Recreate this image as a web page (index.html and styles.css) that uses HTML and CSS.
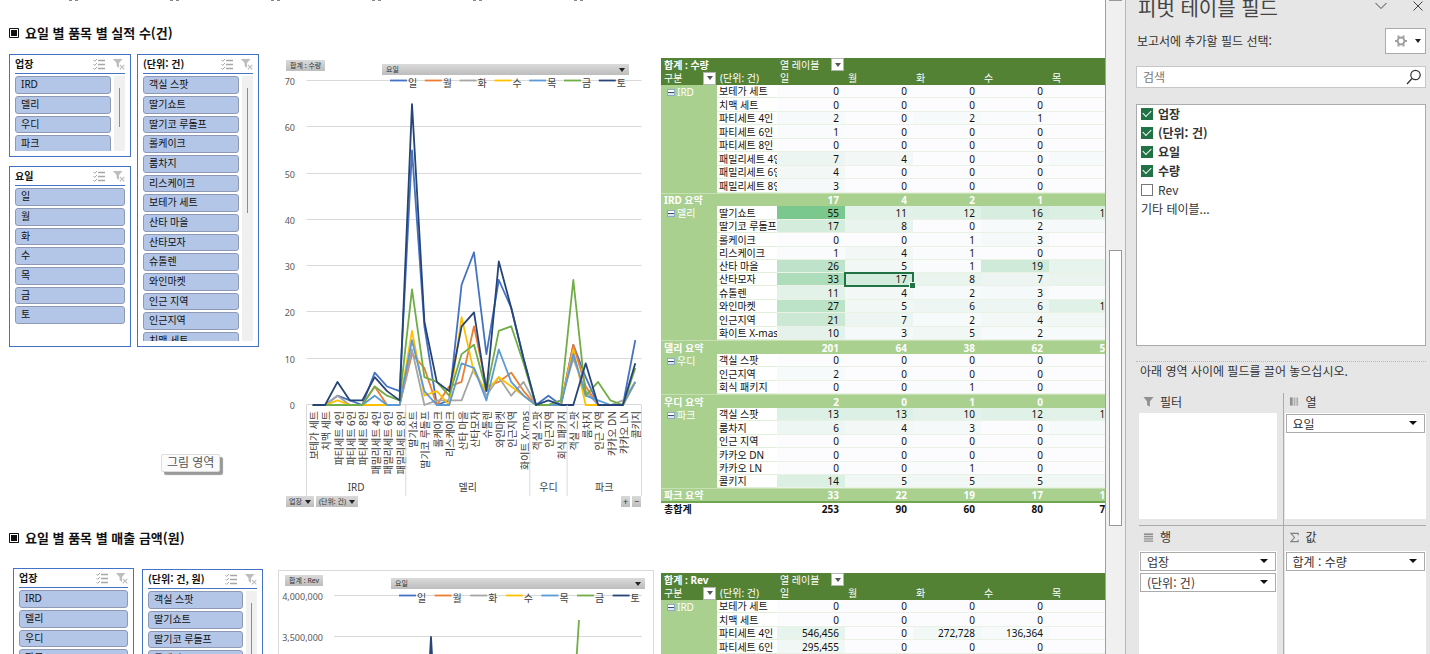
FILE: index.html
```
<!DOCTYPE html>
<html lang="ko">
<head>
<meta charset="utf-8">
<title>피벗 테이블 필드</title>
<link rel="stylesheet" href="styles.css">
</head>
<body>
<svg class="defs" aria-hidden="true">
  <symbol id="multi" viewBox="0 0 12 12">
    <path d="M5 2.500h7M5 6.500h7M5 10.500h7" stroke="#a6a6a6" stroke-width="1.400"/>
    <path d="M0.500 2.200l1.200 1.200L4 1M0.500 6.200l1.200 1.200L4 5M0.500 10.200l1.200 1.200L4 9" fill="none" stroke="#a6a6a6"/>
  </symbol>
  <symbol id="clear" viewBox="0 0 12 12">
    <path d="M0 1h9.500L6 5v5L3.600 8V5z" fill="#bdbdbd"/>
    <path d="M6.500 6.500l5 5M11.500 6.500l-5 5" stroke="#fff" stroke-width="2.500"/>
    <path d="M6.800 6.800l4.500 4.500M11.300 6.800l-4.500 4.500" stroke="#bdbdbd" stroke-width="1.200"/>
  </symbol>
</svg>
<div class="app">
  <main class="sheet">
    <div class="cut-row"><i></i><i></i><i></i><i></i><i></i><i></i></div>

    <h2 class="heading"><svg viewBox="0 0 10 10"><path d="M.5.5h9v9h-9z" fill="none" stroke="#111"/><path d="M2 2h6v6H2z" fill="#111"/></svg>요일 별 품목 별 실적 수(건)</h2>
    <section class="block first">
      <div class="stack">
        <div class="slicer short">
          <header><b>업장</b><button aria-label="다중 선택"><svg><use href="#multi"/></svg></button><button aria-label="필터 지우기"><svg><use href="#clear"/></svg></button></header>
          <div class="body"><div class="items"><button>IRD</button><button>델리</button><button>우디</button><button>파크</button></div><div class="track"><i></i></div></div>
        </div>
        <div class="slicer days">
          <header><b>요일</b><button aria-label="다중 선택"><svg><use href="#multi"/></svg></button><button aria-label="필터 지우기"><svg><use href="#clear"/></svg></button></header>
          <div class="body"><div class="items"><button>일</button><button>월</button><button>화</button><button>수</button><button>목</button><button>금</button><button>토</button></div></div>
        </div>
      </div>
      <div class="slicer tall">
        <header><b>(단위: 건)</b><button aria-label="다중 선택"><svg><use href="#multi"/></svg></button><button aria-label="필터 지우기"><svg><use href="#clear"/></svg></button></header>
        <div class="body"><div class="items"><button>객실 스팟</button><button>딸기쇼트</button><button>딸기코 루돌프</button><button>롤케이크</button><button>룸차지</button><button>리스케이크</button><button>보테가 세트</button><button>산타 마을</button><button>산타모자</button><button>슈톨렌</button><button>와인마켓</button><button>인근 지역</button><button>인근지역</button><button>치맥 세트</button></div><div class="track"><i></i></div></div>
      </div>
      <figure class="chart">
        <div class="chart-top"><button class="chip">합계 : 수량</button><button class="chip wide">요일<span class="caret"></span></button></div>
        <svg id="chart-count" viewBox="0 0 376 421" role="img" aria-label="요일 별 수량"></svg>
        <div class="chart-foot"><button class="chip">업장<span class="caret"></span></button><button class="chip">(단위: 건)<span class="caret"></span></button><button class="chip sq push">+</button><button class="chip sq">−</button></div>
      </figure>
      <div class="pivot" id="pivot-count"></div>
    </section>

    <h2 class="heading second-heading"><svg viewBox="0 0 10 10"><path d="M.5.5h9v9h-9z" fill="none" stroke="#111"/><path d="M2 2h6v6H2z" fill="#111"/></svg>요일 별 품목 별 매출 금액(원)</h2>
    <section class="block second">
      <div class="slicer">
        <header><b>업장</b><button aria-label="다중 선택"><svg><use href="#multi"/></svg></button><button aria-label="필터 지우기"><svg><use href="#clear"/></svg></button></header>
        <div class="body"><div class="items"><button>IRD</button><button>델리</button><button>우디</button><button>파크</button></div></div>
      </div>
      <div class="slicer tall">
        <header><b>(단위: 건, 원)</b><button aria-label="다중 선택"><svg><use href="#multi"/></svg></button><button aria-label="필터 지우기"><svg><use href="#clear"/></svg></button></header>
        <div class="body"><div class="items"><button>객실 스팟</button><button>딸기쇼트</button><button>딸기코 루돌프</button><button>롤케이크</button><button>룸차지</button></div><div class="track"><i></i></div></div>
      </div>
      <figure class="chart framed">
        <div class="chart-top"><button class="chip">합계 : Rev</button><button class="chip wide">요일<span class="caret"></span></button></div>
        <svg id="chart-rev" viewBox="0 0 374 421" role="img" aria-label="요일 별 매출"></svg>
      </figure>
      <div class="pivot" id="pivot-rev"></div>
    </section>
    <div class="tooltip" role="tooltip">그림 영역</div>
  </main>

  <div class="scroll"><i class="up"></i><i class="thumb"></i></div>

  <aside class="pane">
    <header class="pane-title">
      <h1>피벗 테이블 필드</h1>
      <button class="plain" aria-label="작업창 옵션"><svg viewBox="0 0 12 12"><path d="M.5 3l5.500 5.500L11.500 3" fill="none" stroke="#444"/></svg></button>
      <button class="plain" aria-label="닫기"><svg viewBox="0 0 12 12"><path d="M1.500 1.500l9 9M10.500 1.500l-9 9" stroke="#444"/></svg></button>
    </header>
    <div class="choose">
      <span>보고서에 추가할 필드 선택:</span>
      <button class="gear" aria-label="도구"><svg viewBox="0 0 12 12"><circle cx="6" cy="6" r="3.400" fill="none" stroke="#a0a0a0" stroke-width="2"/><path d="M3.500 .5v2.500M8.500 .5v2.500M3.500 9v2.500M8.500 9v2.500M0 6h2.500M9.500 6H12" stroke="#a0a0a0" stroke-width="2"/></svg><span class="caret"></span></button>
    </div>
    <label class="search"><input type="text" placeholder="검색" aria-label="검색"><svg viewBox="0 0 16 16"><circle cx="9.500" cy="6" r="4.700" fill="none" stroke="#333" stroke-width="1.200"/><path d="M6 9.500L1 15" stroke="#333" stroke-width="1.300"/></svg></label>
    <div class="fields">
      <label><input type="checkbox" checked><b>업장</b></label>
      <label><input type="checkbox" checked><b>(단위: 건)</b></label>
      <label><input type="checkbox" checked><b>요일</b></label>
      <label><input type="checkbox" checked><b>수량</b></label>
      <label><input type="checkbox"><span>Rev</span></label>
      <a href="#">기타 테이블...</a>
    </div>
    <p class="hint">아래 영역 사이에 필드를 끌어 놓으십시오.</p>
    <div class="areas">
      <section class="area">
        <h3><svg viewBox="0 0 12 12"><path d="M.5 1h11L7.500 6v5.500l-3-1.500V6z" fill="#909090"/></svg>필터</h3>
        <div class="drop"></div>
      </section>
      <section class="area">
        <h3><svg viewBox="0 0 12 12"><path d="M1 1.500h3v9H1z" fill="#909090"/><path d="M5 1.500h2v9H5zM8 1.500h2v9H8z" fill="#b0b0b0"/></svg>열</h3>
        <div class="drop"><label class="pick"><select aria-label="열 필드"><option>요일</option></select></label></div>
      </section>
      <section class="area">
        <h3><svg viewBox="0 0 12 12"><path d="M1 1.500h10v2H1z" fill="#909090"/><path d="M1 5h10M1 7.500h10M1 10h10" stroke="#909090" stroke-width="1.200"/></svg>행</h3>
        <div class="drop"><label class="pick"><select aria-label="행 필드 1"><option>업장</option></select></label><label class="pick"><select aria-label="행 필드 2"><option>(단위: 건)</option></select></label></div>
      </section>
      <section class="area">
        <h3><svg viewBox="0 0 12 12"><path d="M10 3.500V1.500H2L6 6l-4 4.500h8v-2" fill="none" stroke="#808080" stroke-width="1.200"/></svg>값</h3>
        <div class="drop"><label class="pick"><select aria-label="값 필드"><option>합계 : 수량</option></select></label></div>
      </section>
    </div>
  </aside>
</div>
<script src="report.js"></script>
</body>
</html>
```

FILE: styles.css
```
* { box-sizing: border-box; }

body {
  margin: 0;
  background: #fff;
  color: #111;
  font-family: "Noto Sans", "Noto Sans CJK KR", sans-serif;
  font-size: 10px;
  line-height: 12px;
}

button, input, select { font: inherit; color: inherit; margin: 0; padding: 0; }
button { border: 0; background: none; cursor: pointer; }
h1, h2, h3, p, figure { margin: 0; }
.defs { position: absolute; width: 0; height: 0; }

.app { display: flex; height: 100vh; overflow: hidden; }

/* worksheet */
.sheet { position: relative; flex: 1; min-width: 0; overflow: hidden; }
.cut-row { display: flex; gap: 92px; height: 2px; padding-left: 69px; }
.cut-row i { width: 9px; height: 1px; border-top: 1px dashed #888; }

.heading {
  display: flex;
  align-items: center;
  gap: 6px;
  height: 18px;
  margin-top: 22px;
  padding-left: 9px;
  font-family: "Noto Sans CJK KR", sans-serif;
  font-size: 13px;
  font-weight: 700;
  line-height: 18px;
}
.heading svg { width: 10px; height: 10px; }
.second-heading { margin-top: 12px; }

.block { display: flex; align-items: flex-start; }
.first { height: 463px; margin-top: 12px; padding-left: 9px; }
.second { margin-top: 21px; padding-left: 13px; }
.stack { display: flex; flex-direction: column; gap: 9px; width: 122px; margin-right: 6px; }

/* slicers */
.slicer {
  display: flex;
  flex-direction: column;
  flex: none;
  width: 122px;
  padding: 0 5px 5px;
  border: 1px solid #4472c4;
  background: #fff;
}
.slicer header {
  display: flex;
  align-items: center;
  gap: 8px;
  height: 19px;
  margin-bottom: 2px;
  border-bottom: 1px solid #4472c4;
}
.slicer header b { flex: 1; font-family: "Noto Sans CJK KR", sans-serif; }
.slicer header svg { display: block; width: 12px; height: 12px; }
.body { display: flex; gap: 3px; flex: 1; min-height: 0; overflow: hidden; }
.items { display: flex; flex-direction: column; gap: 2px; flex: 1; }
.items button {
  flex: none;
  height: 18px;
  padding: 0 5px 2px;
  border: 1px solid #8e9ab5;
  border-radius: 3px;
  background: #b4c6e7;
  text-align: left;
}
.items button:nth-child(3n) { height: 17px; }
.track { width: 11px; padding: 12px 0 0 5px; background: #f0f0f0; }
.track i { display: block; width: 1px; height: 39px; background: #8c8c8c; }
.tall .track i { height: 125px; }
.short { height: 103px; }
.days { height: 181px; }
.first .tall { height: 293px; margin-right: 19px; }
.second .slicer { width: 121px; margin-right: 8px; }
.second .tall { margin: 1px 15px 0 0; }

/* charts */
.chart { flex: none; width: 376px; margin-right: 7px; }
.chart > svg { display: block; width: 100%; }
.chart-top { display: flex; align-items: flex-start; height: 21px; padding: 6px 25px 0 8px; }
.chart-top .wide { margin-top: 4px; }
.framed { margin-top: 2px; border: 1px solid #d9d9d9; }
.framed .chart-top { height: 18px; padding: 4px 8px 0 6px; }
.framed .wide { margin-top: 3px; }
.chart-foot { display: flex; gap: 2px; padding: 0 13px 0 8px; }
.chip {
  display: flex;
  align-items: center;
  gap: 3px;
  height: 11px;
  padding: 0 4px;
  background: linear-gradient(#dadada, #bdbdbd);
  color: #333;
  font-size: 7px;
  line-height: 10px;
  white-space: nowrap;
}
.chart-foot .chip { padding: 0 3px; }
.chart .wide { width: 247px; margin-left: auto; justify-content: space-between; }
.framed .wide { width: 254px; }
.chart-foot .sq { width: 9px; padding: 0; justify-content: center; font-size: 9px; }
.push { margin-left: auto; }
.caret { width: 0; height: 0; border: 3px solid transparent; border-top: 4px solid #222; border-bottom: 0; }

.grid { stroke: #d9d9d9; stroke-width: 1; }
.series { fill: none; stroke-width: 1.800; stroke-linejoin: round; }
.axis { fill: #595959; font-size: 9px; }
.label { fill: #404040; font-size: 10px; }
.group { fill: #404040; font-size: 10px; text-anchor: middle; }
.end { text-anchor: end; }

/* pivot tables */
.pivot { flex: 1; min-width: 0; margin-top: 4px; overflow: hidden; }
.second .pivot { margin-top: 5px; }
.pivot table { width: 456px; border-collapse: separate; border-spacing: 0; table-layout: fixed; }
.c-cat { width: 56px; }
.c-item { width: 60px; }
.c-num { width: 68px; }
.pivot tr { height: 13px; }
.pivot tr:nth-child(even) { height: 14px; }
.pivot tr:nth-child(16n) { height: 13px; }
.pivot th, .pivot td {
  padding: 0 6px 0 3px;
  overflow: hidden;
  text-align: left;
  font-weight: 400;
  line-height: 12px;
  white-space: nowrap;
}
.pivot .head th { background: #548235; color: #fff; }
.pivot .head .strong { font-weight: 700; }
.pivot .cat { background: #a9d08e; color: #fff; }
.pivot .item { padding: 0 0 0 2px; border-bottom: 1px solid #e2efda; }
.pivot .num { border-bottom: 1px solid #e9f2e4; text-align: right; }
.pivot .sub th, .pivot .sub td { border-top: 1px solid #c6e0b4; background: #a9d08e; color: #fff; font-weight: 700; text-align: right; }
.pivot .total th, .pivot .total td { border-top: 2px solid #70a552; font-weight: 700; text-align: right; line-height: 11px; }
.pivot .sub th, .pivot .total th { text-align: left; }
.label-cell { display: flex; align-items: center; justify-content: space-between; height: 13px; }
.pivot th.has-filter { padding-right: 1px; }
.filter {
  display: flex;
  align-items: center;
  justify-content: center;
  width: 13px;
  height: 13px;
  border: 1px solid #b5b5b5;
  background: #fff;
}
.filter .caret { border-top-color: #555; }
.toggle {
  display: inline-block;
  width: 8px;
  height: 7px;
  margin: 0 2px 0 3px;
  border: 1px solid #8ea9c8;
  background: linear-gradient(#fff 0 2px, #34506e 2px 3px, #dce6f2 3px);
  vertical-align: 1px;
}
.pivot .active { position: relative; overflow: visible; outline: 2px solid #217346; outline-offset: -1px; }
.active::after {
  content: "";
  position: absolute;
  right: -2px;
  bottom: -3px;
  width: 5px;
  height: 5px;
  border: 1px solid #fff;
  border-width: 1px 0 0 1px;
  background: #217346;
}

.tooltip {
  position: absolute;
  left: 161px;
  top: 454px;
  padding: 0 5px;
  border: 1px solid #ddd;
  border-radius: 2px;
  background: #fbfbfb;
  box-shadow: 3px 3px 1px #999;
  color: #555;
  font-size: 12px;
  line-height: 16px;
}

/* vertical scroll bar */
.scroll { display: flex; flex-direction: column; flex: none; width: 20px; padding: 0 3px; border-left: 1px solid #a0a0a0; background: #f0f0f0; }
.up { height: 1px; margin-bottom: 249px; background: #999; }
.thumb { height: 276px; border: 1px solid #999; background: #fff; }

/* field pane */
.pane {
  display: flex;
  flex-direction: column;
  flex: none;
  width: 305px;
  padding: 0 4px 0 10px;
  border-left: 1px solid #b5b5b5;
  background: #e6e6e6;
  color: #333;
  font-family: "Noto Sans CJK KR", sans-serif;
  font-size: 12px;
  line-height: 18px;
}
.pane-title { display: flex; gap: 25px; height: 25px; padding: 0 2px; }
.pane-title h1 { flex: 1; color: #444; font-size: 20px; font-weight: 400; line-height: 16px; }
.plain { height: 12px; }
.plain svg { display: block; width: 12px; height: 12px; }
.choose { display: flex; align-items: center; justify-content: space-between; margin-top: 3px; padding-left: 1px; }
.gear { display: flex; align-items: center; justify-content: space-between; width: 41px; height: 26px; padding: 0 4px 0 9px; border: 1px solid #ababab; background: #fff; }
.gear svg { width: 12px; height: 12px; }
.search { display: flex; align-items: center; height: 22px; margin-top: 12px; padding: 0 3px 0 6px; border: 1px solid #c6c6c6; background: #fff; }
.search input { flex: 1; min-width: 0; border: 0; outline: 0; background: none; line-height: 16px; }
.search input::placeholder { color: #777; opacity: 1; }
.search svg { width: 16px; height: 16px; }

.fields { display: flex; flex-direction: column; gap: 2px; height: 242px; margin-top: 16px; padding: 0 4px; border: 1px solid #ababab; background: #fff; }
.fields label { display: flex; align-items: center; gap: 5px; height: 17px; line-height: 16px; }
.fields a { color: #333; text-decoration: none; }
.fields input {
  appearance: none;
  width: 12px;
  height: 12px;
  border: 1px solid #777;
  background: #fff;
}
.fields input:checked { display: grid; place-items: center; border-color: #217346; background: #217346; }
.fields input:checked::after {
  content: "";
  width: 7px;
  height: 4px;
  margin-bottom: 2px;
  border: solid #fff;
  border-width: 0 0 1px 1px;
  rotate: -45deg;
}
.hint { margin-top: 15px; padding: 0 4px; border-top: 1px dotted #b8b8b8; }

.areas { display: grid; grid-template: 133px 1fr / 1fr 1fr; flex: 1; min-height: 0; margin: 13px 0 0 3px; }
.area { display: flex; flex-direction: column; padding-right: 6px; }
.area:nth-child(even) { padding: 0 0 0 1px; border-left: 1px solid #ababab; }
.area:nth-child(-n+2) { padding-bottom: 6px; border-bottom: 1px solid #ababab; }
.area h3 { display: flex; align-items: center; gap: 6px; height: 17px; margin-bottom: 3px; padding-left: 4px; font-size: 12px; font-weight: 400; line-height: 16px; }
.area:nth-child(n+3) h3 { height: 22px; }
.area h3 svg { width: 11px; height: 11px; }
.drop { display: flex; flex-direction: column; gap: 2px; flex: 1; padding: 1px; background: #fff; }
.pick { position: relative; display: block; height: 19px; }
.pick select { appearance: none; width: 100%; height: 19px; padding: 0 6px; border: 1px solid #ababab; border-radius: 0; background: #fff; line-height: 16px; }
.pick::after {
  content: "";
  position: absolute;
  right: 8px;
  top: 7px;
  border: 4px solid transparent;
  border-top-color: #111;
  border-bottom: 0;
}
```

FILE: report.js
```
const DAYS = ["일", "월", "화", "수", "목", "금", "토"];
const COLORS = ["#4472c4", "#ed7d31", "#a5a5a5", "#ffc000", "#5b9bd5", "#70ad47", "#264478"];

const GROUPS = [
  { name: "IRD", items: ["보테가 세트", "치맥 세트", "파티세트 4인", "파티세트 6인", "파티세트 8인", "패밀리세트 4인", "패밀리세트 6인", "패밀리세트 8인"], sums: [17, 4, 2, 1, 2] },
  { name: "델리", items: ["딸기쇼트", "딸기코 루돌프", "롤케이크", "리스케이크", "산타 마을", "산타모자", "슈톨렌", "와인마켓", "인근지역", "화이트 X-mas"], sums: [201, 64, 38, 62, 54] },
  { name: "우디", items: ["객실 스팟", "인근지역", "회식 패키지"], sums: [2, 0, 1, 0, 0] },
  { name: "파크", items: ["객실 스팟", "룸차지", "인근 지역", "카카오 DN", "카카오 LN", "콜키지"], sums: [33, 22, 19, 17, 19] }
];

const COUNTS = [
  [0, 0, 2, 1, 0, 7, 4, 3, 55, 17, 0, 1, 26, 33, 11, 27, 21, 10, 0, 2, 0, 13, 6, 0, 0, 0, 14],
  [0, 0, 0, 0, 0, 4, 0, 0, 11, 8, 0, 4, 5, 17, 4, 5, 7, 3, 0, 0, 0, 13, 4, 0, 0, 0, 5],
  [0, 0, 2, 0, 0, 0, 0, 0, 12, 0, 1, 1, 1, 8, 2, 6, 2, 5, 0, 0, 1, 10, 3, 0, 0, 1, 5],
  [0, 0, 1, 0, 0, 0, 0, 0, 16, 2, 3, 0, 19, 7, 3, 6, 4, 2, 0, 0, 0, 12, 0, 0, 0, 0, 5],
  [0, 0, 0, 0, 0, 2, 0, 0, 14, 3, 0, 0, 9, 8, 1, 12, 5, 2, 0, 0, 0, 11, 2, 1, 0, 0, 5],
  [0, 0, 0, 0, 0, 4, 2, 1, 25, 6, 5, 2, 11, 13, 3, 16, 17, 9, 0, 0, 1, 27, 2, 5, 1, 0, 8],
  [0, 0, 5, 1, 1, 6, 3, 1, 65, 18, 5, 3, 17, 20, 3, 31, 21, 10, 0, 1, 0, 0, 9, 0, 0, 0, 9]
];

const REVENUE = [
  [0, 0, 546456, 295455],
  [0, 0, 0, 0],
  [0, 0, 272728, 0],
  [0, 0, 136364, 0],
  [0, 0, 0, 0]
];

function heat(value, max) {
  const t = Math.min(1, value / max);
  const mix = (a, b) => Math.round(a + (b - a) * t);
  return `rgb(${mix(252, 99)},${mix(252, 190)},${mix(255, 123)})`;
}

function pivot(id, title, data, max, groups, total) {
  const filter = '<button class="filter" aria-label="필터"><span class="caret"></span></button>';
  let html = '<table><colgroup><col class="c-cat"><col class="c-item">' + '<col class="c-num">'.repeat(5) + "</colgroup><tbody>";
  html += `<tr class="head"><th class="strong" colspan="2">합계 : ${title}</th><th class="has-filter"><div class="label-cell">열 레이블${filter}</div></th><th colspan="4"></th></tr>`;
  html += `<tr class="head"><th class="has-filter"><div class="label-cell">구분${filter}</div></th><th>(단위: 건)</th>${DAYS.slice(0, 5).map(d => `<th>${d}</th>`).join("")}</tr>`;
  let row = 0;
  for (const group of groups) {
    group.items.forEach((item, i) => {
      const cat = i ? "" : `<button class="toggle" aria-label="축소"></button>${group.name}`;
      html += `<tr><td class="cat">${cat}</td><td class="item">${item}</td>`;
      for (let d = 0; d < 5; d++) {
        const v = data[d][row];
        const active = item === "산타모자" && d === 1 ? " active" : "";
        html += `<td class="num${active}" style="background:${heat(v, max)}">${v.toLocaleString("en-US")}</td>`;
      }
      html += "</tr>";
      row++;
    });
    if (group.sums) html += `<tr class="sub"><th colspan="2">${group.name} 요약</th>${group.sums.map(v => `<td>${v}</td>`).join("")}</tr>`;
  }
  if (total) html += `<tr class="total"><th colspan="2">총합계</th>${total.map(v => `<td>${v}</td>`).join("")}</tr>`;
  document.getElementById(id).innerHTML = html + "</tbody></table>";
}

function legend(x, y, pitch) {
  return DAYS.map((day, i) => {
    const left = x + i * pitch;
    return `<path class="series" d="M${left} ${y}h17" stroke="${COLORS[i]}"/><text class="label" x="${left + 18}" y="${y + 6}">${day}</text>`;
  }).join("");
}

function countChart() {
  const left = 28.5, right = 363.5, base = 330, top = 6;
  const step = (right - left) / 27;
  const y = v => base - v * (base - top) / 70;
  let out = "";
  for (let v = 0; v <= 70; v += 10) {
    const gy = Math.round(y(v)) - 0.5;
    out += `<path class="grid" d="M${left} ${gy}H${right}"/><text class="axis end" x="17" y="${gy + 4}">${v}</text>`;
  }
  COUNTS.forEach((row, s) => {
    const pts = row.map((v, i) => `${(left + step * (i + 0.5)).toFixed(1)},${y(v).toFixed(1)}`).join(" ");
    out += `<polyline class="series" points="${pts}" stroke="${COLORS[s]}"/>`;
  });
  let n = 0;
  out += `<path class="grid" d="M${left} ${base}V421"/>`;
  for (const group of GROUPS) {
    const start = left + step * n;
    group.items.forEach(item => {
      const x = left + step * (n + 0.5) + 5;
      out += `<text class="label end" transform="translate(${x.toFixed(1)} 336) rotate(-90)">${item}</text>`;
      n++;
    });
    const end = left + step * n;
    out += `<path class="grid" d="M${end.toFixed(1)} ${base}V421"/><text class="group" x="${((start + end) / 2).toFixed(1)}" y="416">${group.name}</text>`;
  }
  document.getElementById("chart-count").innerHTML = out + legend(112, 5.5, 34.8);
}

function revenueChart() {
  let out = "";
  ["4,000,000", "3,500,000", "3,000,000"].forEach((text, i) => {
    const gy = 6.5 + i * 41;
    out += `<path class="grid" d="M55 ${gy}H363"/><text class="axis end" x="44" y="${gy + 4}">${text}</text>`;
  });
  out += `<polyline class="series" points="141,247 152,48 163,247" stroke="${COLORS[6]}"/>`;
  out += `<polyline class="series" points="289,200 300,31" stroke="${COLORS[5]}"/>`;
  document.getElementById("chart-rev").innerHTML = out + legend(120, 6.5, 35.6);
}

pivot("pivot-count", "수량", COUNTS, 65, GROUPS, [253, 90, 60, 80, 75]);
pivot("pivot-rev", "Rev", REVENUE, 4000000, [{ name: "IRD", items: GROUPS[0].items.slice(0, 4) }], null);
countChart();
revenueChart();
```
